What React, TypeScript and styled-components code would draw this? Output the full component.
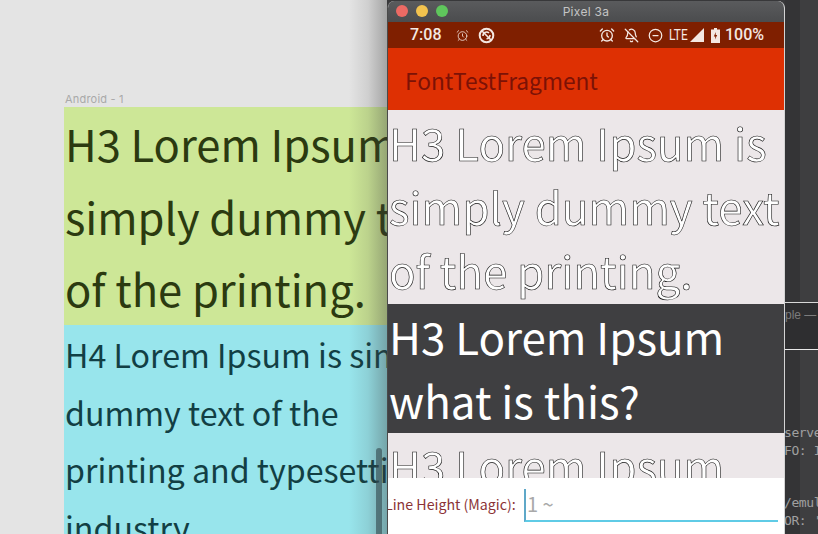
import React from "react";
import styled, { createGlobalStyle } from "styled-components";
import { AlarmClock, BellOff, CircleMinus } from "lucide-react";

const Global = createGlobalStyle`
  html, body { margin: 0; padding: 0; background: #333; }
  #root { width: 818px; height: 534px; }
`;

const sans = `"Noto Sans CJK SC", "Noto Sans", sans-serif`;

const Desktop = styled.div`
  display: flex;
  width: 818px;
  height: 534px;
  overflow: hidden;
  background: #38383a;
`;

const Canvas = styled.section`
  position: relative;
  flex: 0 0 387px;
  height: 534px;
  overflow: hidden;
  background: #e4e4e4;
  padding: 92px 0 0 65px;
  box-sizing: border-box;
`;

const FrameLabel = styled.div`
  font: 11px/14px "Inter", sans-serif;
  color: #a9a9a9;
  letter-spacing: 0.2px;
`;

const Frame = styled.div`
  width: 420px;
  margin-left: -1px;
  margin-top: 1px;
`;

const GreenBlock = styled.div`
  background: #cde797;
  height: 218px;
  box-sizing: border-box;
  padding: 1px 0 0 1px;
  font: 400 43.5px/72.5px ${sans};
  color: #2b3a10;
  white-space: nowrap;
`;

const CyanBlock = styled.div`
  background: #98e5ec;
  height: 300px;
  box-sizing: border-box;
  padding: 1px 0 0 1px;
  font: 400 32.2px/57.5px ${sans};
  color: #123f44;
  white-space: nowrap;
`;

const WindowShade = styled.div`
  position: absolute;
  top: 0;
  right: 0;
  bottom: 0;
  width: 38px;
  background: linear-gradient(to right, rgba(60, 60, 60, 0), rgba(60, 60, 60, 0.12) 50%, rgba(60, 60, 60, 0.38));
`;

const CanvasScrollbar = styled.div`
  position: absolute;
  right: 5px;
  top: 448px;
  bottom: 0;
  width: 6px;
  border-radius: 3px 3px 0 0;
  background: rgba(50, 70, 75, 0.6);
`;

const Emulator = styled.main`
  flex: 0 0 398px;
  height: 533px;
  margin-top: 1px;
  display: flex;
  flex-direction: column;
  border-radius: 7px 7px 0 0;
  border-left: 1px solid #4a4a4a;
  border-right: 1px solid #d4d4d4;
  box-sizing: border-box;
  overflow: hidden;
  background: #fff;
`;

const TitleBar = styled.header`
  position: relative;
  flex: 0 0 21px;
  display: flex;
  align-items: center;
  justify-content: center;
  background: linear-gradient(#5a5b5d, #4b4c4e);
  font: 12px/1 "Inter", sans-serif;
  color: #c4c4c4;
  letter-spacing: 0.3px;
`;

const Lights = styled.div`
  position: absolute;
  left: 8px;
  top: 4px;
  display: flex;
  gap: 8px;
`;

const Light = styled.span<{ $c: string }>`
  width: 12px;
  height: 12px;
  border-radius: 50%;
  background: ${(p) => p.$c};
`;

const StatusBar = styled.div`
  flex: 0 0 26px;
  display: flex;
  align-items: center;
  padding: 0 20px 0 22px;
  background: #7f1f00;
  color: #f4e8e2;
  font: 500 16px/1 "Roboto", sans-serif;
`;

const Time = styled.span`
  margin-right: 14px;
`;

const IconSlot = styled.span<{ $gap?: number }>`
  display: inline-flex;
  margin-right: ${(p) => p.$gap ?? 0}px;
`;

const Spacer = styled.div`
  flex: 1;
`;

const Lte = styled.span`
  font: 400 14px/1 "Roboto", sans-serif;
  margin-right: 2px;
  transform: scaleX(0.85);
  transform-origin: left center;
  width: 19px;
`;

const AppBar = styled.div`
  flex: 0 0 62px;
  display: flex;
  align-items: center;
  padding: 4px 0 0 17px;
  box-sizing: border-box;
  background: #de3003;
  color: #7c1206;
  font: 400 22.7px/1 ${sans};
`;

const Content = styled.div`
  flex: 0 0 368px;
  overflow: hidden;
  background: #ece7e9;
  font-family: ${sans};
  font-weight: 400;
`;

const Outlined = styled.div<{ $tall: number }>`
  padding-left: 1px;
  font-size: 43.9px;
  line-height: 64.2px;
  color: #fff;
  -webkit-text-stroke: 0.6px #111;
  white-space: nowrap;
  height: ${(p) => p.$tall}px;
  box-sizing: border-box;
  will-change: transform;
`;

const Band = styled.div`
  background: #3f3f41;
  color: #fff;
  padding-left: 1px;
  font-size: 43.9px;
  line-height: 64.2px;
  white-space: nowrap;
  height: 129px;
`;

const InputRow = styled.div`
  flex: 1;
  display: flex;
  background: #fff;
  padding: 11px 6px 0 0;
`;

const InputLabel = styled.label`
  font: 400 14.2px/30px ${sans};
  color: #8b3336;
  margin-left: -3px;
  width: 139px;
  flex: none;
  white-space: nowrap;
`;

const Field = styled.div`
  flex: 1;
  height: 31px;
  border-bottom: 2px solid #5fcbe6;
  border-left: 2px solid #5fa8c8;
  font: 400 20px/30px ${sans};
  color: #a9a9a9;
  padding-left: 1px;
`;

const Ide = styled.aside`
  flex: 1;
  display: flex;
  flex-direction: column;
  background: linear-gradient(to right, #343436 0, #343436 15px, #3e3e40 15px);
  overflow: hidden;
`;

const IdeTop = styled.div`
  flex: 0 0 302px;
  border-bottom: 1px solid #d8d8d8;
`;

const IdeTab = styled.div`
  flex: 0 0 46px;
  background: #2e2e30;
  border-bottom: 1px solid #e8e8e8;
  color: #7c7c7c;
  font: 12px/24px "Liberation Sans", sans-serif;
  white-space: nowrap;
`;

const Log = styled.pre`
  margin: 0 0 0 -1px;
  padding-top: 74px;
  font: 13px/17.6px "DejaVu Sans Mono", monospace;
  letter-spacing: -0.4px;
  color: #a0a0a0;
`;

const Sync = () => (
  <svg width="17" height="17" viewBox="0 0 17 17" fill="none" stroke="currentColor">
    <circle cx="8.5" cy="8.5" r="6.8" strokeWidth="2" />
    <path d="M5 9a3.6 3.6 0 0 1 6-3M12 8a3.6 3.6 0 0 1-3.500 3.800" strokeWidth="1.600" />
    <path d="M4 4l9 9" strokeWidth="1.600" />
  </svg>
);

const SignalIcon = () => (
  <svg width="14" height="14" viewBox="0 0 14 14">
    <path d="M14 0v14H0z" fill="currentColor" />
  </svg>
);

const BatteryIcon = () => (
  <svg width="9" height="15" viewBox="0 0 9 15">
    <path d="M3 0h3v1.500h3V15H0V1.500h3z" fill="currentColor" />
    <path d="M4.800 4L2.800 8.500h1.500L4 11.500l2.200-4.500H4.700z" fill="#7f1f00" />
  </svg>
);

export default function App() {
  return (
    <Desktop>
      <Global />
      <Canvas>
        <FrameLabel>Android - 1</FrameLabel>
        <Frame>
          <GreenBlock>
            H3 Lorem Ipsum is<br />simply dummy text<br />of the printing.
          </GreenBlock>
          <CyanBlock>
            H4 Lorem Ipsum is simply<br />dummy text of the<br />printing and typesetting<br />industry.
          </CyanBlock>
        </Frame>
        <WindowShade />
        <CanvasScrollbar />
      </Canvas>
      <Emulator>
        <TitleBar>
          <Lights>
            <Light $c="#ec6a64" />
            <Light $c="#f3c34e" />
            <Light $c="#5fc65c" />
          </Lights>
          Pixel 3a
        </TitleBar>
        <StatusBar>
          <Time>7:08</Time>
          <IconSlot $gap={9}><AlarmClock size={13} strokeWidth={1.500} /></IconSlot>
          <Sync />
          <Spacer />
          <IconSlot $gap={9}><AlarmClock size={16} strokeWidth={2} /></IconSlot>
          <IconSlot $gap={9}><BellOff size={15} strokeWidth={2} /></IconSlot>
          <IconSlot $gap={6}><CircleMinus size={15} strokeWidth={2} /></IconSlot>
          <Lte>LTE</Lte>
          <IconSlot $gap={7}><SignalIcon /></IconSlot>
          <IconSlot $gap={5}><BatteryIcon /></IconSlot>
          100%
        </StatusBar>
        <AppBar>FontTestFragment</AppBar>
        <Content>
          <Outlined $tall={194}>
            H3 Lorem Ipsum is<br />simply dummy text<br />of the printing.
          </Outlined>
          <Band>H3 Lorem Ipsum<br />what is this?</Band>
          <Outlined $tall={45}>H3 Lorem Ipsum</Outlined>
        </Content>
        <InputRow>
          <InputLabel>Line Height (Magic):</InputLabel>
          <Field>1 ~</Field>
        </InputRow>
      </Emulator>
      <Ide>
        <IdeTop />
        <IdeTab>ple —</IdeTab>
        <Log>{"serve\nFO: I\n\n\n/emul\nOR: '"}</Log>
      </Ide>
    </Desktop>
  );
}
